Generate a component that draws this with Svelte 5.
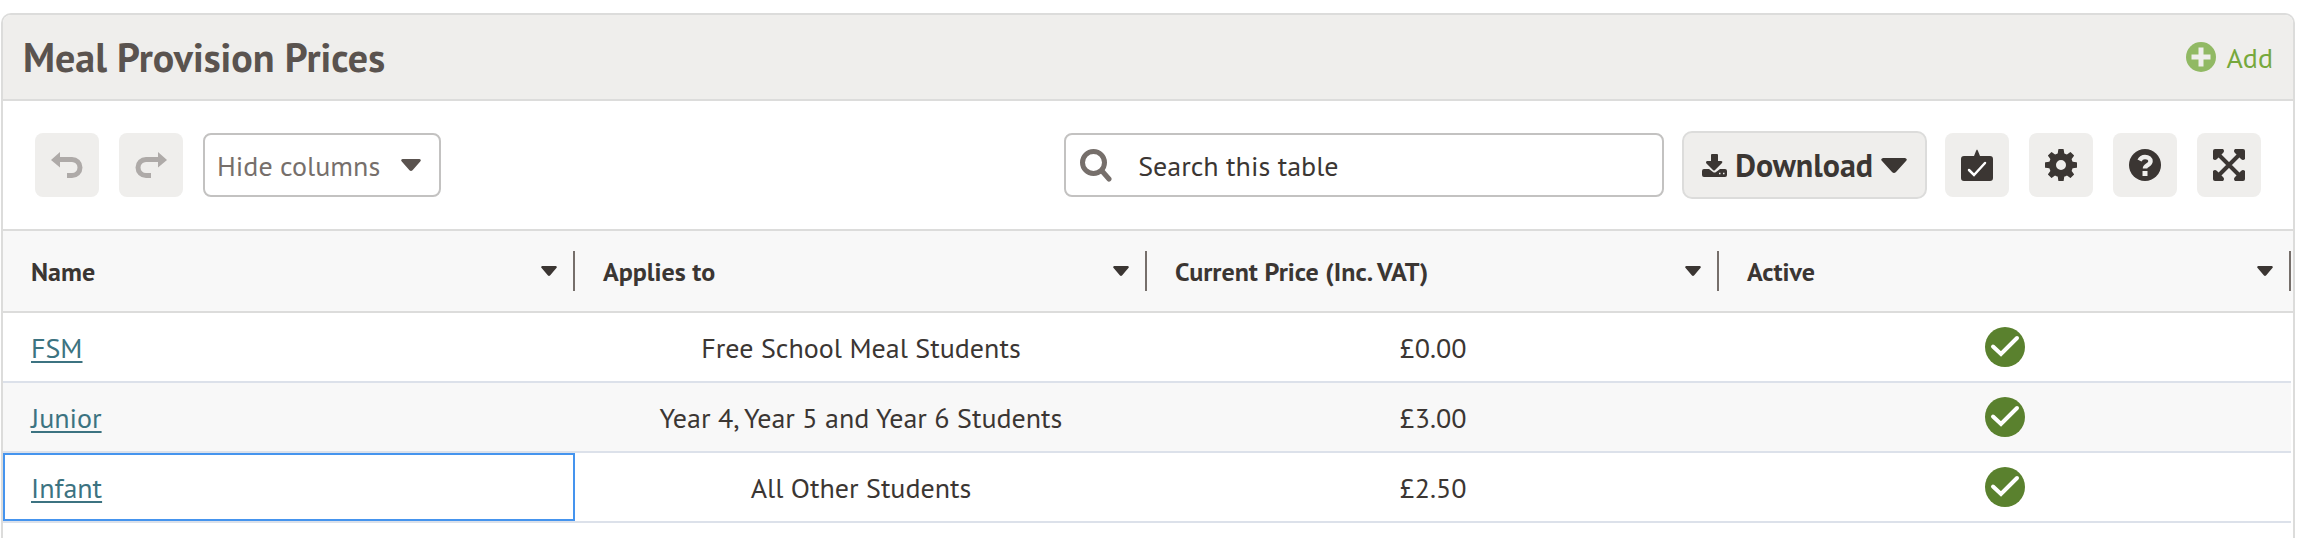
<script>
  let search = $state('');

  const columns = ['Name', 'Applies to', 'Current Price (Inc. VAT)', 'Active'];

  const rows = [
    { name: 'FSM', appliesTo: 'Free School Meal Students', price: '£0.00' },
    { name: 'Junior', appliesTo: 'Year 4, Year 5 and Year 6 Students', price: '£3.00' },
    { name: 'Infant', appliesTo: 'All Other Students', price: '£2.50' }
  ];

  let selected = $state('Infant');
</script>

{#snippet caret(width, height)}
  <svg class="caret" {width} {height} viewBox="0 0 26 15" preserveAspectRatio="none" aria-hidden="true">
    <path d="M2 0h22q3 1 1 3L15 14q-2 2-4 0L1 3Q-1 1 2 0z" />
  </svg>
{/snippet}

<section class="panel">
  <header class="panel-header">
    <h2>Meal Provision Prices</h2>
    <a class="add" href="#add">
      <svg width="30" height="30" viewBox="0 0 30 30" aria-hidden="true">
        <circle cx="15" cy="15" r="15" fill="#91b964" />
        <path d="M15 8v14M8 15h14" stroke="#efeeec" stroke-width="5" stroke-linecap="square" stroke-linejoin="round" />
      </svg>
      Add
    </a>
  </header>

  <div class="toolbar">
    <div class="group">
      <button class="icon-button" aria-label="Undo" disabled>
        <svg width="32" height="26" viewBox="0 0 32 26">
          <path d="M0 8 9 0v5h12a10.500 10.500 0 0 1 0 21h-5v-5h5a5.500 5.500 0 0 0 0-11H9v5.500z" />
        </svg>
      </button>
      <button class="icon-button" aria-label="Redo" disabled>
        <svg width="32" height="26" viewBox="0 0 32 26">
          <path d="M32 8 23 0v5H11a10.500 10.500 0 0 0 0 21h5v-5h-5a5.500 5.500 0 0 1 0-11h12v5.500z" />
        </svg>
      </button>
      <div class="select">
        <select aria-label="Hide columns">
          <option>Hide columns</option>
        </select>
        {@render caret(20, 12)}
      </div>
    </div>

    <div class="group">
      <label class="search">
        <svg width="32" height="33" viewBox="0 0 32 33" aria-hidden="true">
          <circle cx="13.500" cy="13.500" r="11" fill="none" stroke="#766f6b" stroke-width="5" />
          <path d="m22 22 7 8" stroke="#766f6b" stroke-width="5" stroke-linecap="round" />
        </svg>
        <input type="text" placeholder="Search this table" aria-label="Search this table" bind:value={search} />
      </label>
      <button class="download">
        <svg width="25" height="23" viewBox="0 0 25 23" aria-hidden="true">
          <path d="M10 0h5q1 0 1 1v6h3q2 0 1 2l-7 7q-1 1-2 0L4 9Q4 7 5 7h4V1q0-1 1-1z" />
          <path d="M2 15h5l4 3q1.500 1 3 0l4-3h5q2 0 2 2v4q0 2-2 2H2q-2 0-2-2v-4q0-2 2-2z" />
          <path d="M17 19.500h1.500M21 19.500h1.500" stroke="#efeeec" stroke-width="1.500" />
        </svg>
        <span>Download</span>
        {@render caret(26, 15)}
      </button>
      <div class="group icons">
        <button class="icon-button" aria-label="Reports">
          <svg width="32" height="32" viewBox="0 0 32 32">
            <path d="M3 7h10l2-5q1-3 2 0l2 5h10q3 0 3 3v19q0 3-3 3H3q-3 0-3-3V10q0-3 3-3z" />
            <path d="m8 21 5 5 11-12" fill="none" stroke="#fff" stroke-width="2.500" stroke-linecap="round" />
          </svg>
        </button>
        <button class="icon-button" aria-label="Settings">
          <svg width="32" height="32" viewBox="0 0 32 32">
            <circle cx="16" cy="16" r="8.500" fill="none" stroke="#3b3633" stroke-width="7" />
            {#each [0, 45, 90, 135, 180, 225, 270, 315] as angle}
              <path d="M12.500 6 13.300 .5q0-.5.500-.5h4.400q.5 0 .5.500L19.500 6z" transform="rotate({angle} 16 16)" />
            {/each}
          </svg>
        </button>
        <button class="icon-button" aria-label="Help">
          <svg width="32" height="32" viewBox="0 0 32 32">
            <circle cx="16" cy="16" r="16" />
            <path d="M10.500 11.500C12 8.500 14 8 16 8c3.500 0 5.500 2 5.500 4.300 0 4-5.500 3.700-5.500 7.200" fill="none" stroke="#efeeec" stroke-width="4.500" />
            <path d="M13.500 22h5v5h-5z" fill="#efeeec" />
          </svg>
        </button>
        <button class="icon-button" aria-label="Full screen">
          <svg width="32" height="32" viewBox="0 0 32 32">
            <path d="m5 5 22 22M27 5 5 27" stroke="#3b3633" stroke-width="4" />
            {#each [0, 90, 180, 270] as angle}
              <path d="M2 0h8q2 2 0 4L4 10q-2 2-4 0V2q0-2 2-2z" transform="rotate({angle} 16 16)" />
            {/each}
          </svg>
        </button>
      </div>
    </div>
  </div>

  <table>
    <colgroup>
      {#each columns as column}
        <col />
      {/each}
      <col class="gutter" />
    </colgroup>
    <thead>
      <tr>
        {#each columns as column}
          <th scope="col">
            <div class="heading">
              <span>{column}</span>
              <button class="menu" aria-label="{column} menu">{@render caret(16, 10)}</button>
            </div>
          </th>
        {/each}
        <td class="gutter"></td>
      </tr>
    </thead>
    <tbody>
      {#each rows as row}
        <tr>
          <td class="name" class:selected={selected === row.name} onclick={() => (selected = row.name)}>
            <a href="#{row.name}">{row.name}</a>
          </td>
          <td>{row.appliesTo}</td>
          <td>{row.price}</td>
          <td>
            <svg class="tick" width="40" height="40" viewBox="0 0 40 40" role="img" aria-label="Active">
              <circle cx="20" cy="20" r="20" fill="#5a812e" />
              <path d="m8 19.500 8 7.500 16-16" fill="none" stroke="#fff" stroke-width="4" stroke-linecap="round" />
            </svg>
          </td>
        </tr>
      {/each}
    </tbody>
  </table>
</section>

<style>
  :global(body) {
    background: #fff;
  }

  :global(#app) {
    padding-top: 13px;
  }

  .panel {
    box-sizing: border-box;
    min-height: calc(100vh - 13px);
    margin: 0 21px 0 1px;
    border: 2px solid #dcdcdb;
    border-bottom: 0;
    border-radius: 10px 10px 0 0;
    overflow: hidden;
    color: #3b3633;
    font-family: 'PT Sans', Lato, sans-serif;
    font-size: 28px;
  }

  .panel-header {
    display: flex;
    align-items: center;
    justify-content: space-between;
    height: 84px;
    padding: 0 20px;
    background: #efeeec;
    border-bottom: 2px solid #dcdcdb;
  }

  h2 {
    margin: 0;
    color: #5a534f;
    font-size: 40px;
    line-height: 48px;
  }

  .add {
    display: flex;
    align-items: center;
    gap: 10px;
    color: #76a83c;
    text-decoration: none;
  }

  .toolbar {
    display: flex;
    align-items: center;
    justify-content: space-between;
    padding: 30px 32px;
    border-bottom: 2px solid #dcdcdb;
  }

  .group {
    display: flex;
    align-items: center;
    gap: 18px;
  }

  .group:first-child,
  .icons {
    gap: 20px;
  }

  button {
    display: flex;
    align-items: center;
    justify-content: center;
    padding: 0;
    border: 0;
    background: #efeeec;
    color: inherit;
    font-family: inherit;
    cursor: pointer;
  }

  button svg,
  .caret {
    fill: currentColor;
  }

  .icon-button {
    width: 64px;
    height: 64px;
    border-radius: 8px;
  }

  .icon-button:disabled {
    color: #aeaaa8;
    cursor: default;
  }

  .select {
    position: relative;
    color: #5a534f;
  }

  .select .caret {
    position: absolute;
    top: 26px;
    right: 20px;
    pointer-events: none;
  }

  select {
    box-sizing: border-box;
    width: 238px;
    height: 64px;
    padding: 0 48px 0 12px;
    border: 2px solid #c3c2c1;
    border-radius: 8px;
    background: #fff;
    color: #766f6b;
    font: inherit;
    appearance: none;
  }

  .search {
    box-sizing: border-box;
    display: flex;
    align-items: center;
    gap: 26px;
    width: 600px;
    height: 64px;
    padding: 0 14px;
    border: 2px solid #c3c2c1;
    border-radius: 8px;
  }

  input {
    flex: 1;
    min-width: 0;
    padding: 0;
    border: 0;
    outline: 0;
    background: none;
    color: inherit;
    font: inherit;
  }

  input::placeholder {
    color: #3b3633;
    opacity: 1;
  }

  .download {
    gap: 8px;
    height: 68px;
    padding: 0 18px;
    border: 2px solid #dcdcdb;
    border-radius: 10px;
    font-size: 32px;
    font-weight: bold;
  }

  table {
    width: 100%;
    border-spacing: 0;
    table-layout: fixed;
  }

  col.gutter {
    width: 2px;
  }

  th,
  thead td {
    padding: 0;
    background: #f8f8f8;
    border-bottom: 2px solid #dcdcdb;
  }

  th {
    padding: 20px 0;
    font-size: 26px;
    text-align: left;
  }

  .heading {
    display: flex;
    align-items: center;
    justify-content: space-between;
    height: 40px;
    padding: 0 16px 0 28px;
    border-right: 2px solid #766f6b;
  }

  .menu {
    background: none;
  }

  tbody td {
    height: 68px;
    padding: 0;
    border-bottom: 2px solid #dce1ea;
    text-align: center;
  }

  tbody tr:nth-child(even) td {
    background: #f8f8f8;
  }

  tbody td.name {
    padding-left: 28px;
    text-align: left;
  }

  td.selected {
    box-shadow: inset 0 0 0 2px #4594ee;
  }

  td a {
    color: #3c7381;
    text-decoration-thickness: 2px;
    text-underline-offset: 3px;
  }

  .tick {
    display: block;
    margin: 0 auto;
  }
</style>
